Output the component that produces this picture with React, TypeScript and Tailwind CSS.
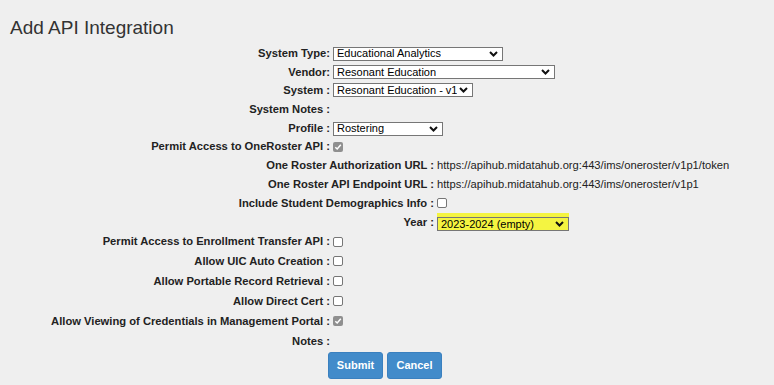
import type { ReactNode } from "react";

const Chevron = () => (
  <svg width="9" height="6" viewBox="0 0 9 6" className="shrink-0">
    <path d="M1 1 L4.5 4.5 L8 1" fill="none" stroke="#111" strokeWidth="2" />
  </svg>
);

const Select = ({ value, width, yellow }: { value: string; width: string; yellow?: boolean }) => (
  <div
    className={`flex items-center justify-between h-[14px] border border-[#767676] pl-[3px] pr-[4px] text-[11px] leading-none text-black ${width} ${
      yellow ? "bg-[#f4f441]" : "bg-white"
    }`}
  >
    <span className="whitespace-nowrap overflow-hidden">{value}</span>
    <Chevron />
  </div>
);

const Box = ({ checked }: { checked?: boolean }) =>
  checked ? (
    <span className="flex items-center justify-center w-[10px] h-[10px] rounded-[2px] bg-[#8f8f8f]">
      <svg width="8" height="8" viewBox="0 0 8 8">
        <path d="M1.3 4.2 L3.2 6 L6.8 1.8" fill="none" stroke="#fff" strokeWidth="1.5" />
      </svg>
    </span>
  ) : (
    <span className="block w-[10px] h-[10px] rounded-[2px] border border-[#767676] bg-white" />
  );

// main column rows: label ends at 330px, value starts at 333px
const Row = ({ label, h, children }: { label: string; h: string; children?: ReactNode }) => (
  <div className={`flex items-center ${h}`}>
    <div className="w-[330px] shrink-0 text-right font-bold text-[11.2px] text-[#222] whitespace-nowrap">{label}</div>
    <div className="pl-[3px] flex items-center">{children}</div>
  </div>
);

// nested table rows: label ends at 434px
const SubRow = ({ label, h, children }: { label: string; h: string; children?: ReactNode }) => (
  <div className={`flex items-center ${h}`}>
    <div className="w-[434px] shrink-0 text-right font-bold text-[11.2px] text-[#222] whitespace-nowrap">{label}</div>
    <div className="pl-[3px] flex items-center">{children}</div>
  </div>
);

export default function App() {
  return (
    <div className="w-[774px] h-[385px] bg-[#efefef] font-['Liberation_Sans',Arial,sans-serif] text-[#333] overflow-hidden">
      <h1 className="pt-[17px] pl-[10px] h-[39px] text-[19px] leading-[22px] text-[#333]">Add API Integration</h1>

      <div className="mt-[5px] flex flex-col">
        <Row label="System Type:" h="h-[19px]">
          <Select value="Educational Analytics" width="w-[170px]" />
        </Row>
        <Row label="Vendor:" h="h-[18px]">
          <Select value="Resonant Education" width="w-[222px]" />
        </Row>
        <Row label="System :" h="h-[18px]">
          <Select value="Resonant Education - v1" width="w-[140px]" />
        </Row>
        <Row label="System Notes :" h="h-[21px]" />
        <Row label="Profile :" h="h-[17px]">
          <Select value="Rostering" width="w-[110px]" />
        </Row>
        <Row label="Permit Access to OneRoster API :" h="h-[19px]">
          <Box checked />
        </Row>

        <SubRow label="One Roster Authorization URL :" h="h-[19px]">
          <span className="text-[11.2px] text-[#222] whitespace-nowrap">
            https://apihub.midatahub.org:443/ims/oneroster/v1p1/token
          </span>
        </SubRow>
        <SubRow label="One Roster API Endpoint URL :" h="h-[19px]">
          <span className="text-[11.2px] text-[#222] whitespace-nowrap">https://apihub.midatahub.org:443/ims/oneroster/v1p1</span>
        </SubRow>
        <SubRow label="Include Student Demographics Info :" h="h-[18px]">
          <Box />
        </SubRow>
        <SubRow label="Year :" h="h-[20px]">
          <div className="bg-[#f4f441] pt-[4px]">
            <Select value="2023-2024 (empty)" width="w-[132px]" yellow />
          </div>
        </SubRow>

        <Row label="Permit Access to Enrollment Transfer API :" h="h-[19px]">
          <Box />
        </Row>
        <Row label="Allow UIC Auto Creation :" h="h-[20px]">
          <Box />
        </Row>
        <Row label="Allow Portable Record Retrieval :" h="h-[20px]">
          <Box />
        </Row>
        <Row label="Allow Direct Cert :" h="h-[20px]">
          <Box />
        </Row>
        <Row label="Allow Viewing of Credentials in Management Portal :" h="h-[20px]">
          <Box checked />
        </Row>
        <Row label="Notes :" h="h-[20px]" />

        <div className="flex gap-[4px] pl-[328px] mt-[1px]">
          <button className="w-[55px] h-[27px] rounded-[3px] bg-[#428bca] border border-[#3a80bf] text-white text-[11px] font-bold">
            Submit
          </button>
          <button className="w-[55px] h-[27px] rounded-[3px] bg-[#428bca] border border-[#3a80bf] text-white text-[11px] font-bold">
            Cancel
          </button>
        </div>
      </div>
    </div>
  );
}
